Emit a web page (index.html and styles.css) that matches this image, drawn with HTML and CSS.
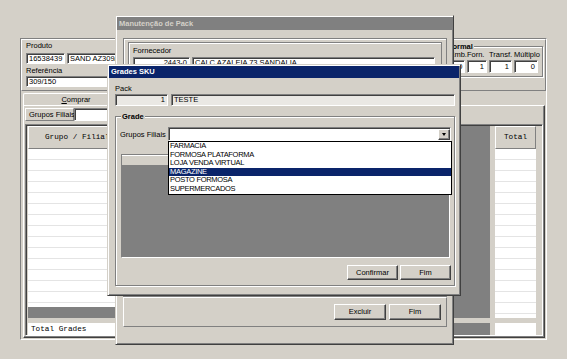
FILE: index.html
```html
<!DOCTYPE html>
<html lang="pt-BR">
<head>
  <meta charset="UTF-8" />
  <meta name="viewport" content="width=device-width, initial-scale=1.0"/>
  <title>Grades SKU</title>
  <link rel="stylesheet" href="styles.css">
</head>
<body>
  <div class="desktop">

    <!-- janela de fundo: produto -->
    <div class="win-bg">
      <div class="bg-head">
        <div class="prod-fields">
          <div class="lbl">Produto</div>
          <div class="row">
            <span class="field num w-code">16538439</span>
            <span class="field w-desc">SAND AZ309/150 AZALEIA</span>
          </div>
          <div class="lbl lbl-ref">Referência</div>
          <span class="field w-ref">309/150</span>
        </div>
        <div class="group normal">
          <span class="group-title">Normal</span>
          <div class="qty-cols">
            <div class="qty w-qtde"><span class="field num">0</span></div>
            <div class="qty w-emb"><div class="lbl">Emb.Forn.</div><span class="field num">1</span></div>
            <div class="qty w-transf"><div class="lbl">Transf.</div><span class="field num">1</span></div>
            <div class="qty w-mult"><div class="lbl">Múltiplo</div><span class="field num">0</span></div>
          </div>
        </div>
      </div>

      <div class="tabs"><span class="tab"><u>C</u>omprar</span></div>

      <div class="tab-page">
        <div class="filter">
          <span class="filter-lbl">Grupos Filiais</span>
          <span class="field w-filter"></span>
        </div>
        <div class="grid">
          <div class="grid-main">
            <div class="col-group">
              <div class="col-head head-left">Grupo / Filial</div>
              <div class="rows"></div>
            </div>
            <div class="col-total">
              <div class="col-head">Total</div>
              <div class="rows"></div>
            </div>
            <div class="vstrip"></div>
          </div>
          <div class="grid-foot">
            <div class="foot-label">Total Grades</div>
            <div class="foot-total"></div>
            <div class="vstrip"></div>
          </div>
        </div>
      </div>
    </div>

    <!-- Manutenção de Pack (inativa) -->
    <div class="win win-pack">
      <div class="titlebar inactive">Manutenção de Pack</div>
      <div class="pack-body">
        <div class="pack-panel">
          <div class="pack-group">
            <div class="lbl">Fornecedor</div>
            <div class="row">
              <span class="field num w-forn">2443-0</span>
              <span class="field w-forn-desc">CALÇ AZALEIA 73 SANDALIA</span>
            </div>
          </div>
        </div>
        <div class="pack-buttons">
          <button class="btn btn-pack">Excluir</button>
          <button class="btn btn-pack">Fim</button>
        </div>
      </div>
    </div>

    <!-- Grades SKU (ativa) -->
    <div class="win win-sku">
      <div class="titlebar">Grades SKU</div>
      <div class="sku-body">
        <div class="lbl lbl-pack">Pack</div>
        <div class="row pack-row">
          <span class="field ro num w-pack">1</span>
          <span class="field ro w-pack-desc">TESTE</span>
        </div>

        <div class="group grade">
          <span class="group-title">Grade</span>
          <div class="combo-row">
            <span class="combo-lbl">Grupos Filiais</span>
            <div class="combo">
              <span class="combo-btn"></span>
              <ul class="dropdown">
                <li>FARMACIA</li>
                <li>FORMOSA PLATAFORMA</li>
                <li>LOJA VENDA VIRTUAL</li>
                <li class="sel">MAGAZINE</li>
                <li>POSTO FORMOSA</li>
                <li>SUPERMERCADOS</li>
              </ul>
            </div>
          </div>
          <div class="sku-grid">
            <div class="sku-grid-head"></div>
          </div>
          <div class="sku-buttons">
            <button class="btn">Confirmar</button>
            <button class="btn">Fim</button>
          </div>
        </div>
      </div>
    </div>

  </div>
</body>
</html>
```

FILE: styles.css
```css
* {
  margin: 0;
  padding: 0;
  box-sizing: border-box;
}

body {
  width: 567px;
  height: 359px;
  overflow: hidden;
  background: #d4d0c8;
  font-family: 'Liberation Sans', Arial, sans-serif;
  font-size: 7.5px;
  color: #000;
}

.desktop {
  position: relative;
  width: 567px;
  height: 359px;
}

.lbl {
  line-height: 8px;
  white-space: nowrap;
}

.row {
  display: flex;
  gap: 2px;
}

/* campos */
.field {
  display: block;
  height: 11px;
  line-height: 9px;
  padding: 0 2px;
  background: #fff;
  border: 1px solid;
  border-color: #808080 #fff #fff #808080;
  box-shadow: inset 1px 1px 0 #404040;
  white-space: nowrap;
  overflow: hidden;
}

.field.ro {
  background: #eae8e4;
}

.field.num {
  text-align: right;
}

.btn {
  height: 15px;
  width: 51px;
  font: inherit;
  line-height: 13px;
  text-align: center;
  background: #d4d0c8;
  border: 1px solid;
  border-color: #fff #404040 #404040 #fff;
  box-shadow: inset -1px -1px 0 #808080;
}

.group {
  position: relative;
  border: 1px solid #808080;
  box-shadow: inset 1px 1px 0 #fff, 1px 1px 0 #fff;
}

.group-title {
  position: absolute;
  top: -5px;
  left: 5px;
  padding: 0 1px;
  line-height: 9px;
  font-weight: bold;
  background: #d4d0c8;
}

/* janelas */
.win {
  position: absolute;
  display: flex;
  flex-direction: column;
  padding: 1px;
  background: #d4d0c8;
  border: 1px solid;
  border-color: #d4d0c8 #404040 #404040 #d4d0c8;
  box-shadow: inset 1px 1px 0 #fff, inset -1px -1px 0 #808080;
}

.titlebar {
  height: 12px;
  line-height: 12px;
  padding-left: 2px;
  font-weight: bold;
  color: #fff;
  background: #0a246a;
  white-space: nowrap;
}

.titlebar.inactive {
  height: 13px;
  line-height: 13px;
  color: #d4d0c8;
  background: #808080;
}

/* fundo */
.win-bg {
  position: absolute;
  left: 20px;
  top: 38px;
  width: 527px;
  height: 302px;
  display: flex;
  flex-direction: column;
  border: 1px solid;
  border-color: #808080 #fff #fff #808080;
}

.bg-head {
  display: flex;
  height: 52px;
  padding: 2px 2px 0 4px;
  border: 1px solid;
  border-color: #fff #808080 #808080 #fff;
}

.prod-fields .row {
  margin-top: 2px;
}

.lbl-ref {
  margin-top: 3px;
}

.prod-fields .field {
  margin-top: 1px;
}

.w-code { width: 39px; }
.w-desc { width: 200px; }
.w-ref { width: 150px; }

.normal {
  margin: 4px 0 0 auto;
  width: 103px;
  height: 31px;
}

.qty-cols {
  display: flex;
  justify-content: flex-end;
  align-items: flex-end;
  gap: 2px;
  padding: 4px 4px 0 0;
}

.qty .field {
  height: 13px;
  line-height: 11px;
  margin-top: 1px;
}

.w-qtde { width: 30px; }
.w-emb { width: 24px; }
.w-emb .lbl { margin-left: -18px; }
.w-transf { width: 23px; }
.w-mult { width: 24px; }

.tabs {
  height: 14px;
  padding: 2px 0 0 2px;
}

.tab {
  display: block;
  width: 106px;
  height: 12px;
  line-height: 11px;
  text-align: center;
  border: 1px solid;
  border-bottom: none;
  border-color: #fff #404040 #404040 #fff;
  border-radius: 2px 2px 0 0;
  box-shadow: inset -1px 0 0 #808080;
}

.tab-page {
  flex: 1;
  display: flex;
  flex-direction: column;
  margin: 0 1px 1px 2px;
  padding: 2px 1px 1px 1px;
  border: 1px solid;
  border-color: #fff #404040 #404040 #fff;
  box-shadow: inset -1px -1px 0 #808080;
}

.filter {
  display: flex;
  height: 13px;
}

.filter-lbl {
  width: 49px;
  line-height: 11px;
  padding-left: 3px;
  border: 1px solid;
  border-color: #fff #808080 #808080 #fff;
  white-space: nowrap;
}

.w-filter {
  width: 180px;
  height: 13px;
}

.grid {
  flex: 1;
  display: flex;
  flex-direction: column;
  margin-top: 3px;
  padding: 1px 0 0 2px;
  border: 1px solid;
  border-color: #808080 #fff #fff #808080;
  box-shadow: inset 1px 1px 0 #404040;
  font-family: 'Liberation Mono', 'Courier New', monospace;
  font-size: 7.7px;
}

.grid-main {
  display: flex;
  align-items: flex-start;
  height: 192px;
  background: #808080;
}

.col-group {
  width: 300px;
}

.col-head {
  height: 23px;
  line-height: 21px;
  text-align: center;
  background: #d4d0c8;
  border: 1px solid;
  border-color: #fff #808080 #808080 #fff;
  white-space: nowrap;
}

.head-left {
  text-align: left;
  padding-left: 16px;
}

.rows {
  background: repeating-linear-gradient(to bottom, #fff 0, #fff 10px, #e4e4e4 10px, #e4e4e4 11px);
}

.col-group .rows {
  height: 158px;
}

.col-total {
  align-self: stretch;
  display: flex;
  flex-direction: column;
  width: 46px;
  margin-left: auto;
  border-left: 5px solid #d4d0c8;
}

.col-total .rows {
  flex: 1;
}

.vstrip {
  align-self: stretch;
  width: 6px;
  background: #d4d0c8;
}

.grid-foot {
  display: flex;
  height: 12px;
  margin-top: 5px;
  background: #808080;
}

.foot-label {
  width: 300px;
  padding-left: 3px;
  line-height: 12px;
  background: #fff;
  white-space: nowrap;
}

.foot-total {
  width: 46px;
  margin-left: auto;
  background: #fff;
  border-left: 5px solid #d4d0c8;
}

/* Manutenção de Pack */
.win-pack {
  left: 115px;
  top: 15px;
  width: 339px;
  height: 330px;
}

.pack-body {
  padding: 8px 5px 0 6px;
}

.pack-panel {
  height: 259px;
  padding: 3px 4px;
  border: 1px solid #808080;
  box-shadow: inset 1px 1px 0 #fff;
}

.pack-group {
  height: 250px;
  padding: 4px 4px;
  border: 1px solid #808080;
  box-shadow: inset 1px 1px 0 #fff;
}

.pack-group .row {
  margin-top: 2px;
}

.w-forn { width: 57px; }
.w-forn-desc { width: 243px; }

.pack-buttons {
  display: flex;
  justify-content: flex-end;
  gap: 3px;
  height: 30px;
  padding: 6px 5px;
  border: 1px solid;
  border-color: #fff #808080 #808080 #fff;
}

.btn-pack {
  width: 52px;
  height: 16px;
  line-height: 14px;
}

/* Grades SKU */
.win-sku {
  left: 107px;
  top: 64px;
  width: 354px;
  height: 232px;
}

.sku-body {
  padding: 6px 4px 0 6px;
}

.lbl-pack {
  line-height: 9px;
}

.pack-row {
  gap: 3px;
  margin-top: 1px;
}

.pack-row .field {
  height: 12px;
  line-height: 10px;
}

.w-pack { width: 53px; }
.w-pack-desc { flex: 1; }

.grade {
  height: 170px;
  margin-top: 10px;
  padding: 10px 3px 0 4px;
}

.combo-row {
  display: flex;
  align-items: center;
  height: 14px;
}

.combo-lbl {
  width: 48px;
  white-space: nowrap;
}

.combo {
  position: relative;
  flex: 1;
  height: 14px;
  background: #fff;
  border: 1px solid;
  border-color: #808080 #fff #fff #808080;
  box-shadow: inset 1px 1px 0 #404040;
}

.combo-btn {
  position: absolute;
  right: 0;
  top: 1px;
  width: 12px;
  height: 11px;
  background: #d4d0c8;
  border: 1px solid;
  border-color: #fff #404040 #404040 #fff;
  box-shadow: inset -1px -1px 0 #808080;
}

.combo-btn::after {
  content: "";
  position: absolute;
  left: 3px;
  top: 3px;
  border-left: 2.5px solid transparent;
  border-right: 2.5px solid transparent;
  border-top: 3px solid #000;
}

.dropdown {
  position: absolute;
  left: -1px;
  right: -2px;
  top: 13px;
  padding-bottom: 1px;
  list-style: none;
  background: #fff;
  border: 1px solid #000;
  font-size: 7.5px;
  letter-spacing: -0.3px;
  line-height: 8.5px;
}

.dropdown li {
  padding-left: 1px;
  white-space: nowrap;
}

.dropdown .sel {
  background: #0a246a;
  color: #fff;
}

.sku-grid {
  height: 104px;
  margin: 13px 1px 0;
  background: #808080;
  border: 1px solid;
  border-color: #808080 #fff #fff #808080;
}

.sku-grid-head {
  height: 11px;
  background: #d4d0c8;
  border-top: 1px solid #fff;
  border-bottom: 1px solid #808080;
}

.sku-buttons {
  display: flex;
  justify-content: flex-end;
  gap: 2px;
  margin-top: 7px;
}
```
